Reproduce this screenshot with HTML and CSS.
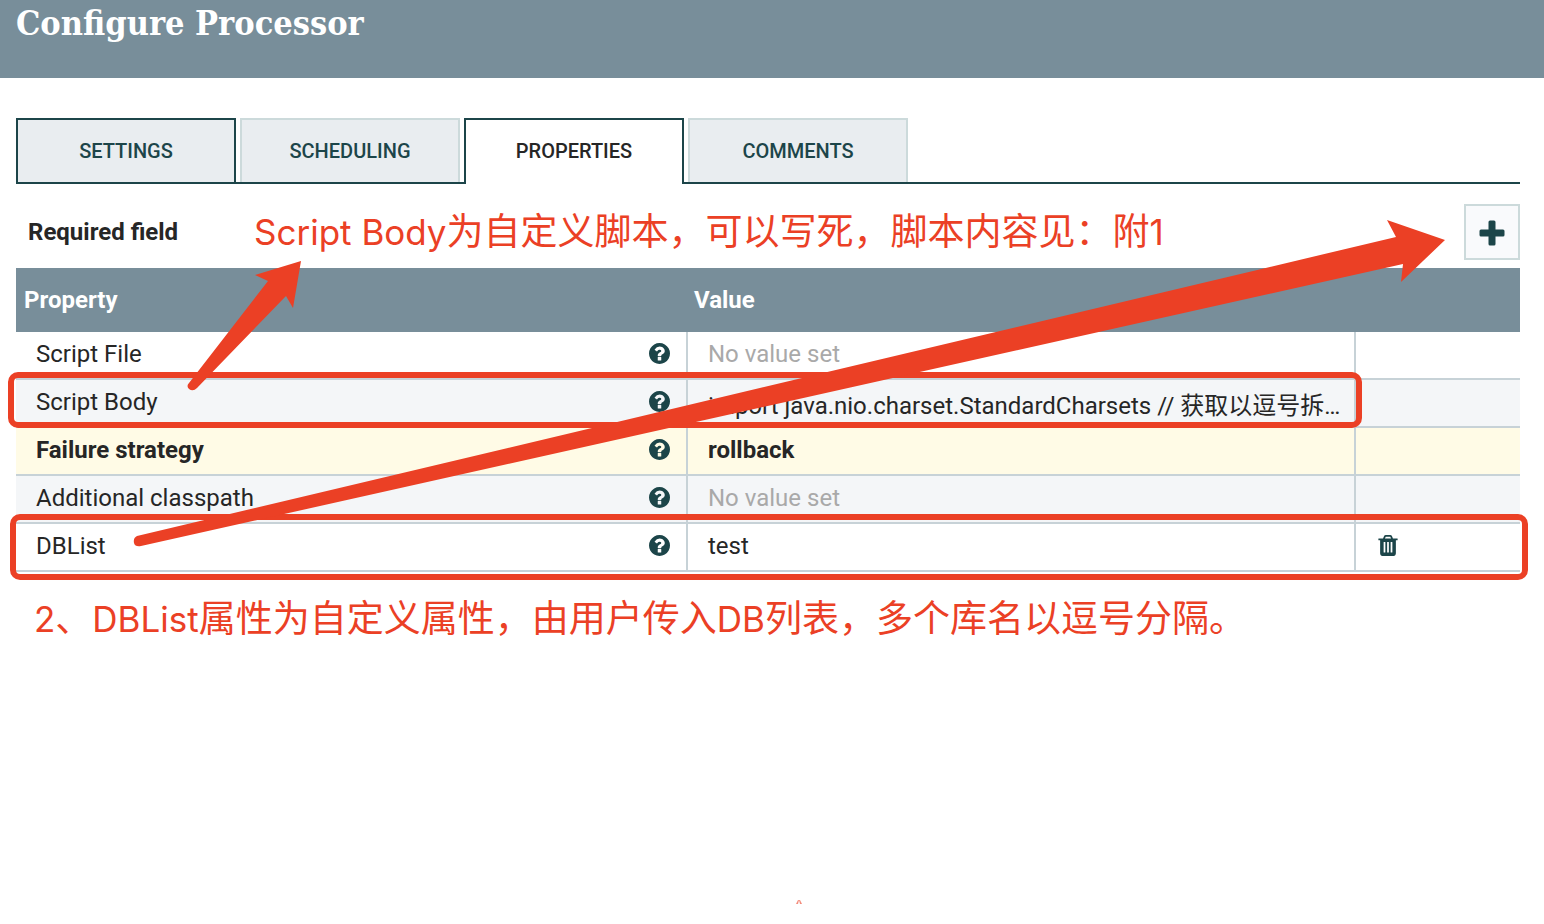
FILE: index.html
```html
<!DOCTYPE html>
<html lang="zh-CN">
<head>
  <meta charset="UTF-8">
  <meta name="viewport" content="width=device-width, initial-scale=1.0">
  <title>Configure Processor</title>
  <link rel="stylesheet" href="styles.css">
</head>
<body>
  <svg class="symbols" aria-hidden="true">
    <symbol id="help" viewBox="128 128 1536 1536">
      <path fill="#1c4549" d="M1024 1376v-192q0-14-9-23t-23-9h-192q-14 0-23 9t-9 23v192q0 14 9 23t23 9h192q14 0 23-9t9-23zm256-672q0-88-55.500-163t-138.500-116-170-41q-243 0-371 213-15 24 8 42l132 100q7 6 19 6 16 0 25-12 53-68 86-92 34-24 86-24 48 0 85.500 26t37.500 59q0 38-20 61t-68 45q-63 28-115.500 86.500t-52.500 125.500v36q0 14 9 23t23 9h192q14 0 23-9t9-23q0-19 21.500-49.500t54.500-49.500q32-18 49-28.500t46-35 44.500-48 28-60.500 12.500-81zm384 192q0 209-103 385.500t-279.500 279.500-385.500 103-385.500-103-279.500-279.500-103-385.500 103-385.500 279.500-279.500 385.500-103 385.500 103 279.500 279.500 103 385.500z"/>
    </symbol>
  </svg>

  <div class="dialog">
    <header class="dialog-header">
      <h1>Configure Processor</h1>
    </header>

    <main class="dialog-content">
      <div class="tabs" role="tablist">
        <button class="tab focused" role="tab">SETTINGS</button>
        <button class="tab" role="tab">SCHEDULING</button>
        <button class="tab selected" role="tab" aria-selected="true">PROPERTIES</button>
        <button class="tab" role="tab">COMMENTS</button>
      </div>

      <div class="toolbar">
        <span class="required">Required field</span>
        <p class="note"><span class="latin">Script Body</span>为自定义脚本，可以写死，脚本内容见：附<span class="latin">1</span></p>
        <button class="add-btn" aria-label="Add property">
          <svg width="26" height="26" viewBox="0 0 26 26"><path d="M9.500 2Q9.500.5 11 .5h4q1.500 0 1.500 1.500v7.500h7.500q1.500 0 1.500 1.500v4q0 1.500-1.500 1.500h-7.500v7.500q0 1.500-1.500 1.500h-4q-1.500 0-1.500-1.500v-7.500H2Q.5 16.500.5 15v-4Q.5 9.500 2 9.500h7.500z" fill="#1c4549"/></svg>
        </button>
      </div>

      <table class="properties">
        <colgroup>
          <col class="col-name">
          <col>
          <col class="col-actions">
        </colgroup>
        <thead>
          <tr><th>Property</th><th>Value</th><th></th></tr>
        </thead>
        <tbody>
          <tr>
            <td><div class="name">Script File <svg class="help"><use href="#help"/></svg></div></td>
            <td class="unset">No value set</td>
            <td></td>
          </tr>
          <tr class="even">
            <td><div class="name">Script Body <svg class="help"><use href="#help"/></svg></div></td>
            <td class="script">import java.nio.charset.StandardCharsets // 获取以逗号拆…</td>
            <td></td>
          </tr>
          <tr class="required-row">
            <td><div class="name">Failure strategy <svg class="help"><use href="#help"/></svg></div></td>
            <td>rollback</td>
            <td></td>
          </tr>
          <tr class="even">
            <td><div class="name">Additional classpath <svg class="help"><use href="#help"/></svg></div></td>
            <td class="unset">No value set</td>
            <td></td>
          </tr>
          <tr>
            <td><div class="name">DBList <svg class="help"><use href="#help"/></svg></div></td>
            <td>test</td>
            <td>
              <button class="delete-btn" aria-label="Delete property">
                <svg width="20" height="21" viewBox="192 128 1408 1536"><path fill="#1c4549" d="M704 1376v-704q0-14-9-23t-23-9h-64q-14 0-23 9t-9 23v704q0 14 9 23t23 9h64q14 0 23-9t9-23zm256 0v-704q0-14-9-23t-23-9h-64q-14 0-23 9t-9 23v704q0 14 9 23t23 9h64q14 0 23-9t9-23zm256 0v-704q0-14-9-23t-23-9h-64q-14 0-23 9t-9 23v704q0 14 9 23t23 9h64q14 0 23-9t9-23zm-544-992h448l-48-117q-7-9-17-11h-317q-10 2-17 11zm928 32v64q0 14-9 23t-23 9h-96v948q0 83-47 143.500t-113 60.500h-832q-66 0-113-58.500t-47-141.500v-952h-96q-14 0-23-9t-9-23v-64q0-14 9-23t23-9h309l70-167q15-37 54-63t79-26h320q40 0 79 26t54 63l70 167h309q14 0 23 9t9 23z"/></svg>
              </button>
            </td>
          </tr>
        </tbody>
      </table>

      <p class="note note-list"><span class="latin">2</span>、<span class="latin">DBList</span>属性为自定义属性，由用户传入<span class="latin">DB</span>列表，多个库名以逗号分隔。</p>
    </main>

    <!-- hand drawn marks over the table -->
    <svg class="marks" width="1544" height="924" viewBox="0 0 1544 924" aria-hidden="true">
      <g fill="none" stroke="#eb4025" stroke-width="6">
        <rect x="11" y="375" width="1348" height="50" rx="7"/>
        <rect x="13" y="517" width="1512" height="60" rx="7"/>
      </g>
      <g fill="#eb4025">
        <path d="M189 383 268 281 255 275 301 261 293 308 286 296 197 388Q193 392 189 389 186 386 189 383z"/>
        <path d="M137 536 1396 237 1387 220 1445 240 1401 282 1403 264 141 546Q135 547 134 543 133 538 137 536z"/>
        <path d="M798 900h1l-1 4h-2zM799 900h1l2 4h-2z" opacity=".6"/>
      </g>
    </svg>
  </div>
</body>
</html>
```
FILE: styles.css
```css
:root {
  --slate: #788e9a;
  --teal: #1c4549;
  --line: #c7d2d7;
  --tab-line: #ccdadb;
  --text: #262626;
  --red: #eb4025;
}
* {
  box-sizing: border-box;
}
body {
  margin: 0;
  background: #fff;
  color: var(--text);
  font-family: Roboto, "Noto Sans CJK SC", sans-serif;
  font-size: 24px;
}
button {
  font-family: inherit;
  cursor: pointer;
}
.symbols {
  display: none;
}
.dialog {
  position: relative;
  min-height: 100vh;
  overflow: hidden;
}
.dialog-header {
  height: 78px;
  padding-left: 16px;
  background: var(--slate);
}
.dialog-header h1 {
  margin: 0;
  color: #fff;
  font-family: "Roboto Slab", "DejaVu Serif Condensed", "DejaVu Serif", serif;
  font-size: 34px;
  font-stretch: condensed;
  font-weight: bold;
  line-height: 46px;
}
.dialog-content {
  padding: 40px 24px 0 16px;
}
.tabs {
  display: flex;
  gap: 4px;
  height: 66px;
  border-bottom: 2px solid var(--teal);
}
.tab {
  width: 220px;
  height: 64px;
  padding: 0;
  border: 2px solid var(--tab-line);
  border-bottom: 0;
  background: #e9edf0;
  color: var(--teal);
  font-size: 20px;
  font-weight: 500;
}
.tab.focused {
  border-color: var(--teal);
}
.tab.selected {
  height: 66px;
  padding-bottom: 2px;
  border-color: var(--teal);
  background: #fff;
  color: var(--text);
}
.toolbar {
  display: flex;
  align-items: center;
  height: 84px;
  padding: 12px 0 0 12px;
}
.required {
  width: 226px;
  font-weight: bold;
}
.note {
  margin: 0;
  padding-bottom: 4px;
  color: var(--red);
  font-family: "Noto Sans CJK SC", sans-serif;
  font-size: 37px;
  line-height: 48px;
  text-autospace: no-autospace;
  white-space: nowrap;
}
.note .latin {
  font-family: Inter, sans-serif;
  font-size: 35px;
}
.note-list {
  padding: 20px 0 0 18px;
}
.add-btn {
  display: flex;
  align-items: center;
  justify-content: center;
  width: 56px;
  height: 56px;
  margin-left: auto;
  padding: 2px 0 0;
  border: 2px solid var(--tab-line);
  background: #f9fafc;
}
.properties {
  width: 100%;
  border-collapse: separate;
  border-spacing: 0;
  table-layout: fixed;
}
.col-name {
  width: 672px;
}
.col-actions {
  width: 164px;
}
.properties th {
  height: 64px;
  padding: 0 8px;
  background: var(--slate);
  color: #fff;
  text-align: left;
}
.properties th + th {
  padding-left: 6px;
}
.properties td {
  height: 48px;
  padding: 0 16px 2px 20px;
  border-right: 2px solid var(--line);
  border-bottom: 2px solid var(--line);
  line-height: 28px;
  white-space: nowrap;
}
.properties td:last-child {
  padding-left: 22px;
  border-right: 0;
}
.name {
  display: flex;
  align-items: center;
  justify-content: space-between;
}
.help {
  width: 21px;
  height: 21px;
  margin-bottom: 2px;
}
.even {
  background: #f4f6f8;
}
.properties .script {
  padding: 6px 16px 0 20px;
}
.unset {
  color: #a9a9a9;
}
.required-row {
  background: #fffbe6;
  font-weight: bold;
}
.delete-btn {
  display: flex;
  padding: 0 0 2px;
  border: 0;
  background: none;
}
.marks {
  position: absolute;
  top: 0;
  left: 0;
  pointer-events: none;
}
```
